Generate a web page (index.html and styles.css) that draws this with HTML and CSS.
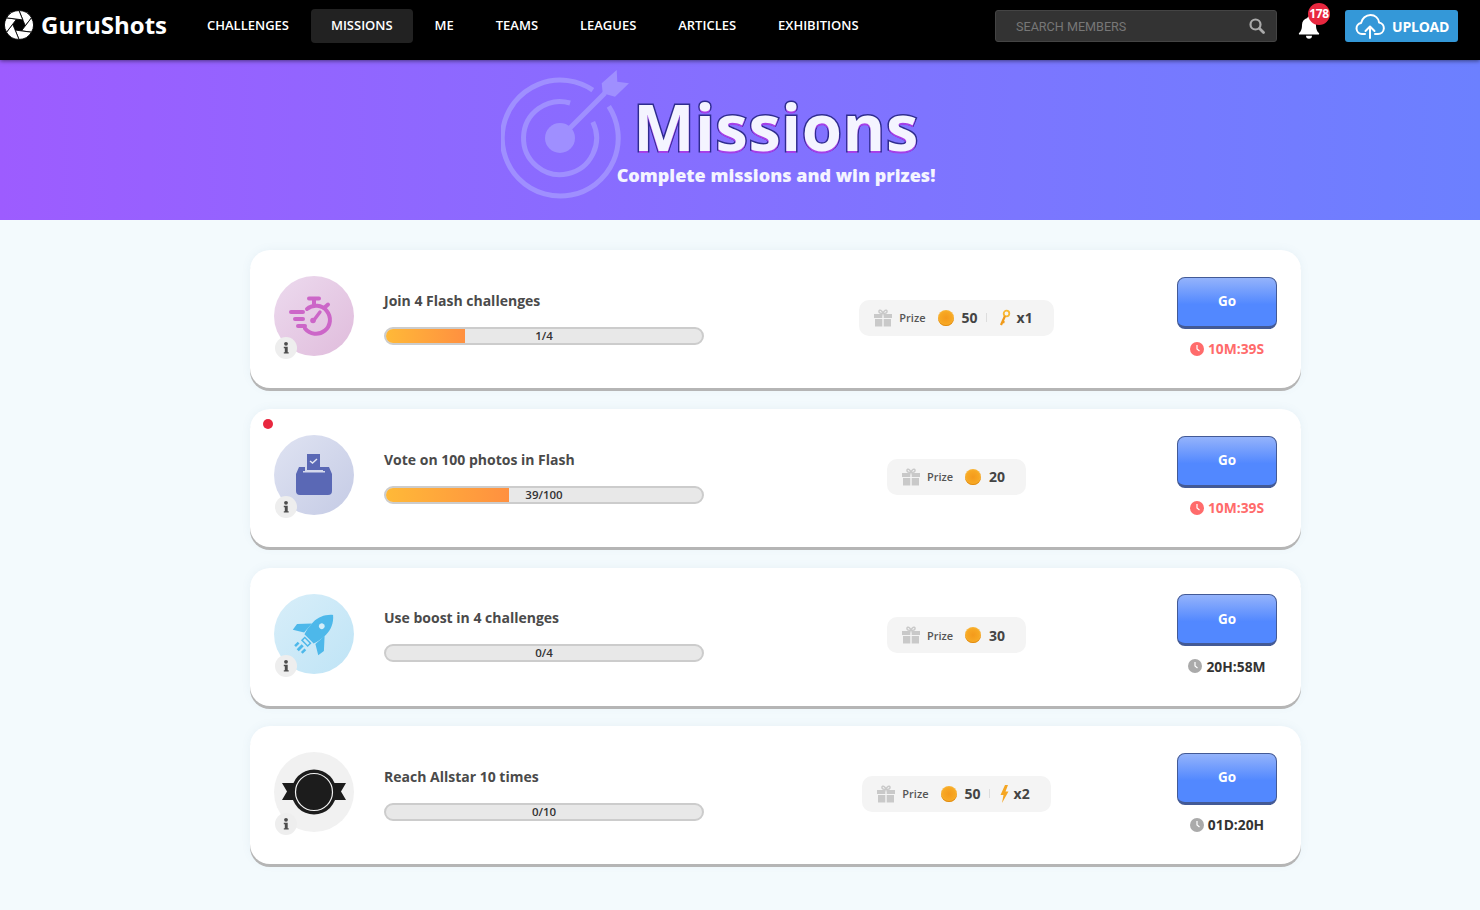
FILE: index.html
```html
<!DOCTYPE html>
<html lang="en">
<head>
    <meta charset="UTF-8">
    <meta name="viewport" content="width=device-width, initial-scale=1.0">
    <title>GuruShots - Missions</title>
    <link rel="stylesheet" href="styles.css">
</head>
<body>
    <svg class="defs" width="0" height="0">
        <defs>
            <symbol id="gift" viewBox="0 0 18 18">
                <path fill="#c9c9c9" d="M0 5h8.300v4H0zM9.700 5H18v4H9.700zM1 10h7.300v7.500H1zM9.700 10H17v7.500H9.700z"/>
                <path fill="none" stroke="#c9c9c9" stroke-width="1.500" d="M9 4.500C6 4.500 4.500 3.500 5 2s3-1 4 2.500C10 1 12.500 .5 13 2s-1 2.500-4 2.500z"/>
            </symbol>
            <symbol id="clock" viewBox="0 0 14 14">
                <circle cx="7" cy="7" r="7" fill="currentColor"/>
                <path fill="none" stroke="#fff" stroke-width="1.200" d="M7 3v4l2.500 2"/>
            </symbol>
            <symbol id="info" viewBox="0 0 22 22">
                <circle cx="11" cy="6.800" r="1.900" fill="#4d4d4d"/>
                <path fill="#4d4d4d" d="M8.800 9.800h3.900v5.400h1v1.400H8.800v-1.400h1v-4h-1z"/>
            </symbol>
        </defs>
    </svg>

    <header class="topbar">
        <a class="logo" href="#">
            <svg class="logo-mark" viewBox="0 0 30 30" width="30" height="30">
                <g fill="#fff" stroke="#000" stroke-width="0.800">
                    <path id="blade" d="M15 .6 21.300 15.760 27.500 7.800A14.400 14.400 0 0 0 15 .6z"/>
                    <use href="#blade" transform="rotate(60 15 15)"/>
                    <use href="#blade" transform="rotate(120 15 15)"/>
                    <use href="#blade" transform="rotate(180 15 15)"/>
                    <use href="#blade" transform="rotate(240 15 15)"/>
                    <use href="#blade" transform="rotate(300 15 15)"/>
                </g>
            </svg>
            <span class="logo-text">GuruShots</span>
        </a>
        <nav class="main-nav">
            <a href="#">CHALLENGES</a>
            <a href="#" class="active">MISSIONS</a>
            <a href="#">ME</a>
            <a href="#">TEAMS</a>
            <a href="#">LEAGUES</a>
            <a href="#">ARTICLES</a>
            <a href="#">EXHIBITIONS</a>
        </nav>
        <div class="search">
            <input type="text" placeholder="SEARCH MEMBERS">
            <svg viewBox="0 0 16 16" width="16" height="16">
                <circle cx="6.500" cy="6.500" r="5" fill="none" stroke="#aaa" stroke-width="2.200"/>
                <path stroke="#aaa" stroke-width="2.800" stroke-linecap="round" d="M10.500 10.500 14.500 14.500"/>
            </svg>
        </div>
        <div class="bell">
            <svg viewBox="0 0 22 24" width="22" height="24">
                <path fill="#fff" d="M11 1.500c1 0 1.600.7 1.600 1.600C16 3.900 18 6.500 18 10c0 5 1.400 6.500 3 8.200.4.500.1 1.300-.6 1.300H1.600c-.7 0-1-.8-.6-1.300C2.600 16.500 4 15 4 10c0-3.500 2-6.100 5.400-6.900 0-.9.600-1.600 1.600-1.600z"/>
                <path fill="#fff" d="M8 20.800h6a3 3 0 0 1-6 0z"/>
            </svg>
            <span class="bell-count">178</span>
        </div>
        <a class="upload" href="#">
            <svg viewBox="0 0 30 26" width="30" height="26" fill="none" stroke="#fff" stroke-width="2" stroke-linecap="round" stroke-linejoin="round">
                <path d="M10 21H7a5.500 5.500 0 0 1-1-10.900C7 5.500 11 2 15.500 2c4.600 0 8 3.200 8.600 7.500A5.800 5.800 0 0 1 23 21h-3"/>
                <path d="M15 25V14M10.500 18 15 13.500 19.500 18"/>
            </svg>
            <span>UPLOAD</span>
        </a>
    </header>

    <section class="hero">
        <div class="hero-text">
            <svg class="hero-target" viewBox="0 0 130 130" width="130" height="130" fill="none" stroke="#9f8fff" stroke-width="5">
                <path d="M107.800 36.400A58 58 0 1 1 91.800 20.100"/>
                <path d="M91.800 52A36.500 36.500 0 1 1 69.100 33"/>
                <circle cx="59" cy="68" r="15" fill="#9f8fff" stroke="none"/>
                <path d="M59 68 104 23"/>
                <path fill="#9f8fff" stroke="none" d="M100.700 13.300 115.700 0 116.300 11.700 128 13.300 114 26.700 101.700 23.300z"/>
            </svg>
            <h1>Missions</h1>
            <p>Complete missions and win prizes!</p>
        </div>
    </section>

    <main class="missions">
        <div class="mission-card">
            <div class="mission-icon icon-flash">
                <svg viewBox="0 0 80 80" width="80" height="80" fill="none" stroke="#cc66c8" stroke-width="4" stroke-linecap="round">
                    <path d="M33 33A14 14 0 1 1 31 52.500"/>
                    <path d="M35 22.500h10M40 23v5M50 32l4-3.500"/>
                    <path d="M17 36h12M21 43h8M24 50h7"/>
                    <path stroke-width="3.400" d="M40 44l6-8"/>
                    <circle cx="39" cy="44.500" r="2.800" fill="#cc66c8" stroke="none"/>
                </svg>
                <span class="info-badge"><svg width="22" height="22"><use href="#info"/></svg></span>
            </div>
            <div class="mission-info">
                <div class="mission-title">Join 4 Flash challenges</div>
                <div class="progress">
                    <div class="progress-fill" style="width: 25%"></div>
                    <div class="progress-label">1/4</div>
                </div>
            </div>
            <div class="mission-prize">
                <div class="prize">
                    <svg class="gift" width="18" height="18"><use href="#gift"/></svg>
                    <span class="prize-label">Prize</span>
                    <span class="coin"></span>
                    <span class="prize-value">50</span>
                    <span class="prize-sep"></span>
                    <svg class="prize-extra" viewBox="0 0 14 18" width="14" height="18">
                        <circle cx="9.500" cy="4.500" r="2.800" fill="none" stroke="#f7b733" stroke-width="1.800"/>
                        <path fill="none" stroke="#f09a1a" stroke-width="2.200" d="M8 7 4 16M5.500 12.500l2 1"/>
                    </svg>
                    <span class="prize-value">x1</span>
                </div>
            </div>
            <div class="mission-action">
                <button class="go-btn">Go</button>
                <div class="timer urgent"><svg width="14" height="14"><use href="#clock"/></svg>10M:39S</div>
            </div>
        </div>

        <div class="mission-card">
            <span class="new-dot"></span>
            <div class="mission-icon icon-vote">
                <svg viewBox="0 0 80 80" width="80" height="80">
                    <path fill="#5a68b5" d="M33 19h13v13h3v3H33z"/>
                    <path fill="none" stroke="#e3e6f3" stroke-width="1.500" d="M36 26l2.500 2 4.500-4"/>
                    <path fill="#5a68b5" d="M25 32h6v4h18v-4h6l3 7v17a4 4 0 0 1-4 4H26a4 4 0 0 1-4-4V39z"/>
                    <path fill="#d5d9ec" d="M29 36h22v1.500H29z"/>
                </svg>
                <span class="info-badge"><svg width="22" height="22"><use href="#info"/></svg></span>
            </div>
            <div class="mission-info">
                <div class="mission-title">Vote on 100 photos in Flash</div>
                <div class="progress">
                    <div class="progress-fill" style="width: 39%"></div>
                    <div class="progress-label">39/100</div>
                </div>
            </div>
            <div class="mission-prize">
                <div class="prize">
                    <svg class="gift" width="18" height="18"><use href="#gift"/></svg>
                    <span class="prize-label">Prize</span>
                    <span class="coin"></span>
                    <span class="prize-value">20</span>
                </div>
            </div>
            <div class="mission-action">
                <button class="go-btn">Go</button>
                <div class="timer urgent"><svg width="14" height="14"><use href="#clock"/></svg>10M:39S</div>
            </div>
        </div>

        <div class="mission-card">
            <div class="mission-icon icon-boost">
                <svg viewBox="0 0 80 80" width="80" height="80">
                    <g transform="rotate(45 40 40) translate(0 2)" fill="#4db8ea">
                        <path d="M40 11c6 5 9 12 9 19 0 6-1 11-2.500 15h-13C32 41 31 36 31 30c0-7 3-14 9-19z"/>
                        <path d="M31 32 21 43l1 7 10-6zM49 32l10 11-1 7-10-6z"/>
                        <path d="M36 47h8v4h-8z" fill="none" stroke="#4db8ea" stroke-width="1.500"/>
                        <path d="M38.500 54h3v7h-3zM34 55h2.500v5H34zM43.500 55H46v5h-2.500z"/>
                        <circle cx="40" cy="27" r="2.800" fill="#d5eef9"/>
                    </g>
                </svg>
                <span class="info-badge"><svg width="22" height="22"><use href="#info"/></svg></span>
            </div>
            <div class="mission-info">
                <div class="mission-title">Use boost in 4 challenges</div>
                <div class="progress">
                    <div class="progress-fill" style="width: 0%"></div>
                    <div class="progress-label">0/4</div>
                </div>
            </div>
            <div class="mission-prize">
                <div class="prize">
                    <svg class="gift" width="18" height="18"><use href="#gift"/></svg>
                    <span class="prize-label">Prize</span>
                    <span class="coin"></span>
                    <span class="prize-value">30</span>
                </div>
            </div>
            <div class="mission-action">
                <button class="go-btn">Go</button>
                <div class="timer"><svg width="14" height="14"><use href="#clock"/></svg>20H:58M</div>
            </div>
        </div>

        <div class="mission-card">
            <div class="mission-icon icon-allstar">
                <svg viewBox="0 0 80 80" width="80" height="80">
                    <path fill="#1c1c1c" d="M8 31h20v17H8l5-8.500zM72 31H52v17h20l-5-8.500z"/>
                    <circle cx="40" cy="40" r="22.500" fill="#1c1c1c"/>
                    <circle cx="40" cy="40" r="18.500" fill="none" stroke="#f2f2f2" stroke-width="1.200"/>
                </svg>
                <span class="info-badge"><svg width="22" height="22"><use href="#info"/></svg></span>
            </div>
            <div class="mission-info">
                <div class="mission-title">Reach Allstar 10 times</div>
                <div class="progress">
                    <div class="progress-fill" style="width: 0%"></div>
                    <div class="progress-label">0/10</div>
                </div>
            </div>
            <div class="mission-prize">
                <div class="prize">
                    <svg class="gift" width="18" height="18"><use href="#gift"/></svg>
                    <span class="prize-label">Prize</span>
                    <span class="coin"></span>
                    <span class="prize-value">50</span>
                    <span class="prize-sep"></span>
                    <svg class="prize-extra bolt" viewBox="0 0 9 18" width="9" height="18">
                        <path fill="#f5a623" d="M5 0 .5 10h3L2 18 8.500 6.500H5.500L8 0z"/>
                    </svg>
                    <span class="prize-value">x2</span>
                </div>
            </div>
            <div class="mission-action">
                <button class="go-btn">Go</button>
                <div class="timer"><svg width="14" height="14"><use href="#clock"/></svg>01D:20H</div>
            </div>
        </div>
    </main>
</body>
</html>
```

FILE: styles.css
```css
* {
    box-sizing: border-box;
}
body {
    margin: 0;
    min-height: 910px;
    font-family: "Open Sans", Arial, sans-serif;
    background-color: #f3fafd;
    color: #444;
}
a {
    color: inherit;
    text-decoration: none;
}
.defs {
    display: block;
    height: 0;
}

/* top bar */
.topbar {
    display: flex;
    align-items: center;
    height: 60px;
    padding-right: 22px;
    background-color: #000;
    box-shadow: 0 1px 4px rgba(0,0,0,0.5);
    position: relative;
    color: #fff;
}
.logo {
    display: flex;
    align-items: center;
    width: 187px;
    padding: 0 0 10px 4px;
}
.logo-mark {
    margin-right: 7px;
}
.logo-text {
    font-size: 24px;
    font-weight: 700;
    line-height: 30px;
}
.main-nav {
    display: flex;
    gap: 1.900px;
    align-items: center;
    padding-bottom: 9px;
}
.main-nav a {
    display: block;
    height: 34px;
    padding: 0 20px;
    font-size: 13px;
    font-weight: 600;
    line-height: 33px;
    border-radius: 4px;
}
.main-nav a.active {
    background-color: #222;
}
.search {
    display: flex;
    align-items: center;
    width: 282px;
    height: 32px;
    margin-left: auto;
    margin-bottom: 8px;
    padding: 0 11px 0 20px;
    background-color: #333;
    border: 1px solid #444;
    border-radius: 3px;
}
.search input {
    flex: 1;
    min-width: 0;
    padding: 0;
    font-family: Roboto, Arial, sans-serif;
    font-size: 12.600px;
    color: #ccc;
    background: none;
    border: none;
    outline: none;
}
.search input::placeholder {
    color: #777;
    opacity: 1;
}
.bell {
    position: relative;
    width: 22px;
    height: 24px;
    margin: 0 25px 7px 21px;
}
.bell-count {
    position: absolute;
    top: -12px;
    left: 10px;
    width: 22px;
    height: 22px;
    font-size: 12px;
    font-weight: 700;
    line-height: 22px;
    text-align: center;
    letter-spacing: -0.4px;
    color: #fff;
    background-color: #e8273f;
    border-radius: 50%;
}
.upload {
    display: flex;
    align-items: center;
    gap: 7px;
    width: 113px;
    height: 32px;
    margin-bottom: 8px;
    padding-left: 10px;
    font-size: 14px;
    font-weight: 700;
    letter-spacing: -0.2px;
    background-color: #3498d8;
    border-radius: 3px;
}

/* banner */
.hero {
    display: flex;
    justify-content: center;
    height: 160px;
    padding: 31px 0 0 72px;
    background: linear-gradient(90deg, #9d5cff 0%, #8470ff 50%, #6c80ff 100%);
}
.hero-text {
    position: relative;
    width: 330px;
    text-align: center;
}
.hero-target {
    position: absolute;
    top: -21px;
    left: -110px;
}
.hero h1 {
    position: relative;
    margin: 0;
    font-size: 65px;
    font-weight: 700;
    line-height: 70px;
    letter-spacing: 0.600px;
    color: #f4f4ff;
    -webkit-text-stroke: 3px #2f2c8f;
    paint-order: stroke fill;
    text-shadow: 0 2px 0 #a63fe8;
}
.hero p {
    position: relative;
    margin: 2px 0 0;
    font-size: 18px;
    font-weight: 800;
    line-height: 24px;
    color: #f4f4ff;
}

/* mission cards */
.missions {
    display: flex;
    flex-direction: column;
    gap: 20.670px;
    width: 1051px;
    margin: 30.400px auto 0 250px;
}
.mission-card {
    position: relative;
    display: flex;
    align-items: center;
    height: 138px;
    padding: 0 24px 3px;
    background-color: #fff;
    border-radius: 20px;
    box-shadow: 0 3px 0 #b5b5b5, 0 0 10px rgba(90,130,160,0.08);
}
.new-dot {
    position: absolute;
    top: 10px;
    left: 13px;
    width: 10px;
    height: 10px;
    background-color: #e8273f;
    border-radius: 50%;
}
.mission-icon {
    position: relative;
    flex-shrink: 0;
    width: 80px;
    height: 80px;
    margin-bottom: 3px;
    border-radius: 50%;
}
.mission-icon > svg:first-child {
    display: block;
}
.icon-flash {
    background: linear-gradient(135deg, #ecdaee, #e0bcdc);
}
.icon-vote {
    background: linear-gradient(135deg, #dfe3f2, #c5cbe5);
}
.icon-boost {
    background: linear-gradient(135deg, #d8eef9, #bfe4f6);
}
.icon-allstar {
    background-color: #f1f1f1;
}
.info-badge {
    position: absolute;
    left: 1px;
    bottom: -3px;
    width: 22px;
    height: 22px;
    background-color: #eee;
    border-radius: 50%;
}
.info-badge svg {
    display: block;
}
.mission-info {
    flex-shrink: 0;
    width: 320px;
    margin-left: 30px;
}
.mission-title {
    font-size: 14px;
    font-weight: 700;
    line-height: 20px;
    margin-bottom: 16px;
    color: #4a4a4a;
}
.progress {
    display: grid;
    height: 18px;
    overflow: hidden;
    background-color: #e8e8e8;
    border: 2px solid #ccc;
    border-radius: 9px;
}
.progress-fill,
.progress-label {
    grid-area: 1 / 1;
}
.progress-fill {
    background: linear-gradient(90deg, #ffb938, #ff9040);
}
.progress-label {
    font-size: 11.500px;
    font-weight: 600;
    line-height: 14px;
    text-align: center;
    color: #333;
}
.mission-prize {
    flex: 1;
    display: flex;
    justify-content: center;
    margin-left: 32px;
}
.prize {
    display: flex;
    align-items: center;
    height: 36px;
    padding: 0 21px 0 15px;
    background-color: #f4f4f4;
    border-radius: 10px;
}
.gift {
    margin-right: 7px;
}
.prize-label {
    margin-right: 12px;
    font-size: 11px;
    font-weight: 600;
    color: #555;
}
.coin {
    width: 16px;
    height: 16px;
    margin-right: 8px;
    background: radial-gradient(circle at 50% 50%, #f49a1c 0%, #f7a823 55%, #fcd06a 100%);
    border-radius: 50%;
    box-shadow: inset 0 -1px 0 #e08a10;
}
.prize-value {
    font-size: 14px;
    font-weight: 700;
    color: #444;
}
.prize-sep {
    width: 1px;
    height: 9px;
    margin: 0 10px 0 8px;
    background-color: #ddd;
}
.prize-extra {
    margin-right: 6px;
}
.prize-extra.bolt {
    margin-right: 5px;
}
.mission-action {
    flex-shrink: 0;
    width: 100px;
}
.go-btn {
    display: block;
    width: 100%;
    height: 52px;
    padding: 0 0 1px;
    font-family: inherit;
    font-size: 13.500px;
    font-weight: 700;
    color: #fff;
    background: linear-gradient(180deg, #94b3fb 0%, #5288ff 55%);
    border: 1px solid #435a96;
    border-bottom-width: 3px;
    border-radius: 8px;
    cursor: pointer;
}
.timer {
    display: flex;
    align-items: center;
    justify-content: center;
    gap: 4px;
    height: 20px;
    margin-top: 10px;
    font-size: 13.800px;
    font-weight: 700;
    white-space: nowrap;
    color: #333;
}
.timer svg {
    color: #aaa;
}
.timer.urgent,
.timer.urgent svg {
    color: #ff6b6b;
}
```
